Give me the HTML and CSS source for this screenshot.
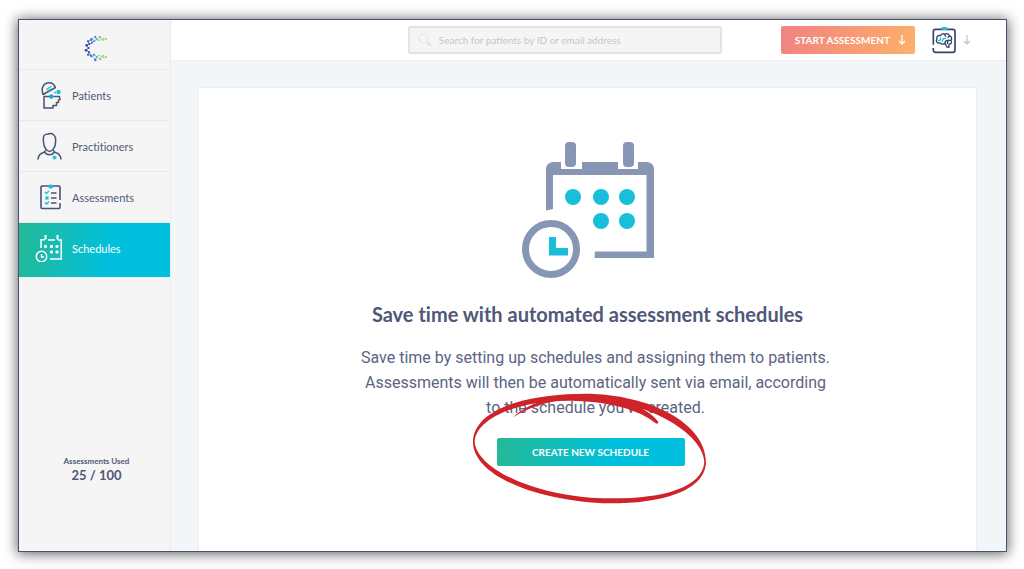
FILE: index.html
```html
<!DOCTYPE html>
<html lang="en">
<head>
<meta charset="utf-8">
<meta name="viewport" content="width=device-width, initial-scale=1">
<title>Schedules</title>
<link rel="stylesheet" href="styles.css">
</head>
<body>
<div class="window">
  <aside class="sidebar">
    <a class="logo" href="#" aria-label="Home">
      <svg width="24" height="28" viewBox="0 0 72 84" aria-hidden="true">
        <g fill="none" stroke-width="2">
          <path stroke="#3d4fb0" d="M22 18L12 22L16 30L8 34L12 42L8 48L14 54L12 62L22 64M22 18L24 26L16 30M14 54L22 64"/>
          <path stroke="#4d9cc8" d="M22 18L34 8L38 16L30 22M22 64L34 76L38 68L30 62"/>
          <path stroke="#5fbf9b" d="M38 16L48 8L52 16L46 20zM38 68L48 76L52 68L46 63z"/>
          <path stroke="#a5d065" d="M52 16L60 12L66 15M56 21L60 12M52 68L60 72L66 69M56 63L60 72"/>
        </g>
        <g fill="#3545a8"><circle cx="12" cy="22" r="3"/><circle cx="8" cy="34" r="4"/><circle cx="16" cy="30" r="3"/><circle cx="14" cy="42" r="3"/><circle cx="6" cy="49" r="4"/><circle cx="15" cy="54" r="3"/><circle cx="12" cy="62" r="3"/></g>
        <g fill="#3d7fd0"><circle cx="22" cy="16" r="4"/><circle cx="24" cy="26" r="3"/><circle cx="22" cy="66" r="4"/><circle cx="34" cy="8" r="3"/><circle cx="34" cy="78" r="4"/><circle cx="30" cy="22" r="3"/><circle cx="30" cy="62" r="3"/></g>
        <g fill="#5bb9a8"><circle cx="38" cy="16" r="3"/><circle cx="48" cy="9" r="3"/><circle cx="38" cy="69" r="3"/><circle cx="49" cy="76" r="3"/></g>
        <g fill="#a5d065"><circle cx="58" cy="17" r="3"/><circle cx="66" cy="15" r="3"/><circle cx="58" cy="66" r="3"/><circle cx="66" cy="69" r="3"/></g>
      </svg>
    </a>
    <nav class="nav" aria-label="Main">
      <a class="nav-item" href="#">
        <svg class="nav-icon" viewBox="0 0 28 28" aria-hidden="true">
          <g fill="none" stroke="#4a5276" stroke-width="1.500" stroke-linejoin="round" stroke-linecap="round">
            <path d="M8 13.500C6 7 8 3 12 2C16 1 19 3 20.500 6.500Z"/>
            <path d="M14 15.500H9V27H18V24.500H21.500V21.500H23.500V19L25 18.500L24.500 15.500H19"/>
          </g>
          <path d="M11.500 8.500L16.500 5M12.500 10L16 8M19 11.500h2" stroke="#1cbfdb" stroke-width="1.300"/>
          <rect x="21.500" y="9" width="4" height="4" rx="1" fill="#1cbfdb"/><circle cx="16.300" cy="15.500" r="2.200" fill="#12a9c6"/>
        </svg>
        <span>Patients</span>
      </a>
      <a class="nav-item" href="#">
        <svg class="nav-icon" viewBox="0 0 28 28" aria-hidden="true">
          <g fill="none" stroke="#4a5276" stroke-width="1.500" stroke-linecap="round" stroke-linejoin="round">
            <path d="M8.500 10C7.500 3 10 2 13 2C17 .5 21.500 3 20.500 9.500C21 15 17 19.500 14.500 19.500C12 19.500 8.500 15 8.500 10Z"/>
            <path d="M10.500 18.500C10 22 4 19 3 27M18.500 18.500C19 22 25 19 26 27M10 20.500C12 23.500 17 23.500 19 20.500"/>
          </g>
          <path d="M19.500 23.500v4M17.500 25.500h4" stroke="#1cbfdb" stroke-width="1.800"/>
        </svg>
        <span>Practitioners</span>
      </a>
      <a class="nav-item" href="#">
        <svg class="nav-icon" viewBox="0 0 28 28" aria-hidden="true">
          <path d="M25 17V4Q25 3 24 3H7Q6 3 6 4V24.500Q6 25.500 7 25.500H24Q25 25.500 25 24V20" fill="none" stroke="#4a5276" stroke-width="1.600"/>
          <rect x="13.500" y="1.500" width="4.500" height="4" rx="1.500" fill="#1cbfdb"/>
          <path d="M16 10h5.500M16 15h5.500M16 20h5.500" stroke="#4a5276" stroke-width="1.500"/>
          <path d="M10 9l1.500 1.500L14 8M10.500 13.500l3 3m0-3l-3 3M10 19.500l1.500 1.500L14 18.500" fill="none" stroke="#1cbfdb" stroke-width="1.500"/>
        </svg>
        <span>Assessments</span>
      </a>
      <a class="nav-item nav-item-active" href="#" aria-current="page">
        <svg class="nav-icon" viewBox="0 0 28 28" aria-hidden="true">
          <g fill="none" stroke="#fff">
            <path d="M6 14V5.800H10M13 6H20M23 6H26.200V25H15" stroke-width="1.500"/>
            <path d="M10.500 1v4.500M22.500 1v4.500" stroke-width="2"/>
            <circle cx="6.500" cy="22.500" r="5.200" stroke-width="1.500"/>
            <path d="M6.500 20V23H9" stroke-width="1.400"/>
          </g>
          <g fill="#fff"><rect x="9" y="11" width="3" height="3" rx="1"/><rect x="15" y="11" width="3" height="3" rx="1"/><rect x="20.500" y="11" width="3" height="3" rx="1"/><rect x="15" y="16.500" width="3" height="3" rx="1"/><rect x="20.500" y="16.500" width="3" height="3" rx="1"/></g>
        </svg>
        <span>Schedules</span>
      </a>
    </nav>
    <div class="usage">
      <span class="usage-label">Assessments Used</span>
      <strong class="usage-value">25 / 100</strong>
    </div>
  </aside>
  <div class="main">
    <header class="topbar">
      <form class="search" role="search">
        <label class="search-label" for="search" aria-label="Search patients">
          <svg width="14" height="14" viewBox="0 0 14 14" aria-hidden="true"><circle cx="5.500" cy="5.500" r="4.500" fill="none" stroke="#e6e6e6" stroke-width="1.200"/><path d="M9 9L13 13" stroke="#e3e3e3" stroke-width="1.800"/></svg>
        </label>
        <input class="search-input" id="search" type="search" placeholder="Search for patients by ID or email address">
      </form>
      <div class="actions">
        <button class="start-button" type="button">
          <span>START ASSESSMENT</span>
          <svg width="8" height="10" viewBox="0 0 8 10" aria-hidden="true"><path d="M4 0V9M1 6L4 9L7 6" fill="none" stroke="#fff" stroke-width="1.300"/></svg>
        </button>
        <button class="account" type="button" aria-label="Account menu">
          <svg width="26" height="28" viewBox="0 0 78 84" aria-hidden="true">
            <path d="M7 56V16Q7 10 13 10H65Q72 10 72 16V71Q72 79 65 79H14Q7 79 7 73V66" fill="none" stroke="#38446c" stroke-width="5"/>
            <rect x="31" y="3" width="18" height="9" rx="4" fill="#1cbfdb"/>
            <path d="M27 51C18 53 13 45 18 40C14 32 22 27 28 29C31 22 39 22 42 26C47 20 56 24 55 30C62 31 64 39 60 43C64 49 60 55 54 54L54 64L48 63L42 52C37 55 31 55 27 51Z" fill="none" stroke="#38446c" stroke-width="4" stroke-linejoin="round"/>
            <path d="M42 26L44 32M55 30L50 35M60 43L51 43M42 52L43 46L51 43L49 54" fill="none" stroke="#38446c" stroke-width="4"/>
            <path d="M20 45L28 42L29 35M33 47L37 38L46 37" fill="none" stroke="#1cbfdb" stroke-width="4"/>
          </svg>
          <svg width="8" height="10" viewBox="0 0 8 10" aria-hidden="true"><path d="M4 0V9M1 6L4 9L7 6" fill="none" stroke="#c4c6ca" stroke-width="1.300"/></svg>
        </button>
      </div>
    </header>
    <main class="content">
      <section class="card">
        <svg class="hero" width="132" height="138" viewBox="0 0 132 138" aria-hidden="true">
          <g fill="#8796b4">
            <rect x="43" y="1" width="11" height="25" rx="4"/>
            <rect x="101" y="1" width="11" height="25" rx="4"/>
            <path d="M24 69.500V29Q24 21 32 21H39V28H60V21H96V28H116V21H124Q132 21 132 29V117H72.500L73 110.500H124.500V34H31V68Z"/>
          </g>
          <circle cx="29" cy="108" r="25.500" fill="none" stroke="#8796b4" stroke-width="7"/>
          <g fill="#17bfda">
            <circle cx="51" cy="56" r="8"/><circle cx="79" cy="56" r="8"/><circle cx="105" cy="56" r="8"/>
            <circle cx="79" cy="80" r="8"/><circle cx="105" cy="80" r="8"/>
            <path d="M27 96H34V107H46V114.500H27Z"/>
          </g>
        </svg>
        <h1 class="title">Save time with automated assessment schedules</h1>
        <p class="description">Save time by setting up schedules and assigning them to patients. Assessments will then be automatically sent via email, according to the schedule you've created.</p>
        <div class="cta">
          <button class="create-button" type="button">CREATE NEW SCHEDULE</button>
          <svg class="scribble" width="260" height="140" viewBox="0 0 780 420" aria-hidden="true">
            <g fill="#cf2229">
              <path d="M160 112C195 75 280 41 375 41C570 42 737 130 738 245C736 335 600 370 450 370L450 355C600 357 728 325 733 245C730 160 560 58 370 53C290 55 205 80 160 112Z"/>
              <path d="M450 370C240 365 39 290 39 185C42 90 190 45 350 42C470 44 570 85 595 126Q594 134 587 130C540 90 450 66 350 63C200 57 50 105 44 185C50 270 240 355 450 355Z"/>
            </g>
          </svg>
        </div>
      </section>
    </main>
  </div>
</div>
</body>
</html>
```
FILE: styles.css
```css
* {
  box-sizing: border-box;
}

body {
  margin: 0;
  padding: 19px 17px 17px 18px;
  min-height: 100vh;
  display: flex;
  background: #fff;
  color: #4f5878;
  font-family: Lato, "Open Sans", sans-serif;
  font-variant-ligatures: none;
}

button {
  border: 0;
  font-family: inherit;
  cursor: pointer;
}

.window {
  flex: 1;
  display: flex;
  border: 1px solid #465370;
  box-shadow: 0 1px 12px 1px rgba(0, 0, 0, 0.6);
}

.sidebar {
  flex: 0 0 152px;
  display: flex;
  flex-direction: column;
  background: #f5f5f5;
  border-right: 1px solid #ebeced;
}

.logo {
  display: flex;
  align-items: center;
  justify-content: center;
  height: 50px;
  padding: 6px 0 0 2px;
  border-bottom: 1px solid #e8e8e9;
}

.nav-item {
  display: flex;
  align-items: center;
  gap: 9px;
  height: 51px;
  padding-left: 16px;
  border-bottom: 1px solid #e8e8e9;
  color: #4f5878;
  font-size: 11px;
  text-decoration: none;
}

.nav-icon {
  width: 28px;
  height: 28px;
}

.nav-item-active {
  height: 54px;
  padding-bottom: 4px;
  border: 0;
  background: linear-gradient(100deg, #25b995, #00c0dd 60%);
  color: #fff;
}

.usage {
  display: flex;
  flex-direction: column;
  align-items: center;
  margin-top: auto;
  padding: 0 0 68px 4px;
}

.usage-label {
  font-size: 8px;
  line-height: 12px;
  font-weight: 700;
}

.usage-value {
  font-size: 13px;
  line-height: 16px;
}

.main {
  flex: 1;
  min-width: 0;
  display: flex;
  flex-direction: column;
  background: #f3f6f8;
}

.topbar {
  display: grid;
  grid-template-columns: 5fr 314px 6fr;
  align-items: center;
  height: 41px;
  background: #fff;
  border-bottom: 1px solid #eceff0;
}

.search {
  grid-column: 2;
  display: flex;
  align-items: center;
  height: 28px;
  padding-left: 8px;
  gap: 7px;
  background: #f5f5f5;
  border: 2px solid #e3e3e3;
  border-radius: 3px;
}

.search-label {
  display: flex;
}

.search-input {
  flex: 1;
  min-width: 0;
  padding: 0;
  border: 0;
  outline: 0;
  background: transparent;
  color: #4f5878;
  font-family: inherit;
  font-size: 10px;
}

.search-input::placeholder {
  color: #c6c6c6;
}

.actions {
  display: flex;
  justify-content: flex-end;
  align-items: center;
  gap: 16px;
  padding-right: 35px;
}

.start-button {
  display: flex;
  align-items: center;
  gap: 8px;
  height: 28px;
  padding: 0 9px 0 14px;
  border-radius: 2px;
  background: linear-gradient(105deg, #f18282, #fdb069);
  color: #fff;
  font-size: 10px;
  font-weight: 700;
  white-space: nowrap;
}

.account {
  display: flex;
  align-items: center;
  gap: 6px;
  padding: 0;
  background: transparent;
}

.content {
  flex: 1;
  display: flex;
  padding: 26px 29px 0 27px;
}

.card {
  flex: 1;
  display: flex;
  flex-direction: column;
  align-items: center;
  padding-top: 53px;
  background: #fff;
  border: 1px solid #eceff1;
  border-bottom: 0;
}

.title {
  margin: 23px 0 0;
  font-size: 20px;
  line-height: 24px;
  font-weight: 700;
}

.description {
  width: 476px;
  max-width: 100%;
  margin: 19px 0 0 16px;
  color: #5b6482;
  font-family: Roboto, sans-serif;
  font-size: 16px;
  line-height: 25px;
  text-align: center;
}

.cta {
  position: relative;
  margin: 18px 0 0 6px;
}

.create-button {
  width: 188px;
  height: 28px;
  border-radius: 2px;
  background: linear-gradient(100deg, #25b995, #00c0dd 60%);
  color: #fff;
  font-size: 10px;
  font-weight: 700;
}

.scribble {
  position: absolute;
  left: -37px;
  top: -58px;
  pointer-events: none;
}
```
